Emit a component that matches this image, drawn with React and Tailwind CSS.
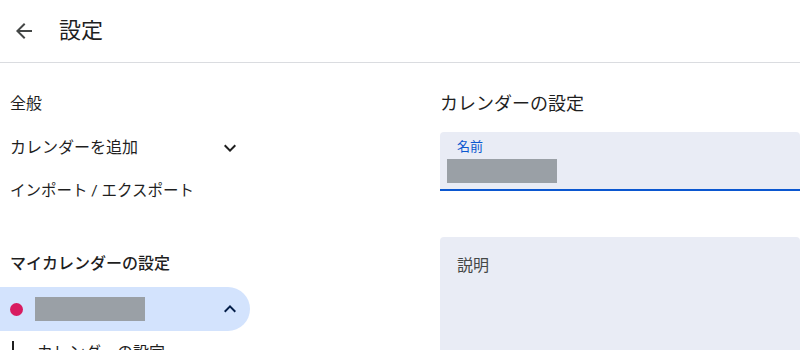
export default function App() {
  const font = { fontFamily: '"Roboto", "Noto Sans CJK JP", sans-serif' };
  return (
    <div className="w-[800px] h-[350px] overflow-hidden bg-white text-[#1f1f1f]" style={font}>
      <header className="h-[63px] flex items-center border-b border-[#dadce0]">
        <button className="w-[48px] h-[48px] flex items-center justify-center text-[#444746]">
          <svg width="24" height="24" viewBox="0 0 24 24" fill="currentColor">
            <path d="M20 11H7.83l5.59-5.59L12 4l-8 8 8 8 1.41-1.41L7.83 13H20v-2z" />
          </svg>
        </button>
        <h1 className="ml-[11px] text-[22px] text-[#1f1f1f] leading-none">設定</h1>
      </header>

      <div className="flex">
        <aside className="w-[250px] shrink-0 pt-[19px]">
          <div className="h-[44px] flex items-center pl-[10px] text-[16px] text-[#1f1f1f]">全般</div>
          <div className="h-[44px] flex items-center justify-between pl-[10px] pr-[8px] text-[16px] text-[#1f1f1f]">
            <span>カレンダーを追加</span>
            <svg width="24" height="24" viewBox="0 0 24 24" fill="currentColor">
              <path d="M7.41 8.59 12 13.17l4.59-4.58L18 10l-6 6-6-6 1.41-1.41z" />
            </svg>
          </div>
          <div className="h-[44px] flex items-center pl-[10px] text-[15.5px] text-[#1f1f1f]">インポート / エクスポート</div>
          <div className="h-[40px]" />
          <div className="h-[20px] flex items-center pl-[10px] text-[16px] font-medium text-[#1f1f1f]">マイカレンダーの設定</div>
          <div className="h-[13px]" />
          <div className="h-[44px] flex items-center bg-[#d3e3fd] rounded-r-full pl-[10px] pr-[8px]">
            <span className="w-[13px] h-[13px] rounded-full bg-[#d81b60]" />
            <span className="ml-[12px] w-[110px] h-[24px] bg-[#9aa0a6]" />
            <svg className="ml-auto text-[#041e49]" width="24" height="24" viewBox="0 0 24 24" fill="currentColor">
              <path d="M7.41 15.41 12 10.83l4.59 4.58L18 14l-6-6-6 6z" />
            </svg>
          </div>
          <div className="flex items-start pl-[12px] pt-[10px]">
            <span className="w-[2px] h-[20px] bg-[#1f1f1f]" />
            <span className="ml-[23px] text-[16px] text-[#1f1f1f] leading-[20px] mt-[2px]">カレンダーの設定</span>
          </div>
        </aside>

        <main className="flex-1 pl-[190px] pt-[29px]">
          <h2 className="text-[18px] text-[#1f1f1f] leading-[24px]">カレンダーの設定</h2>
          <div className="mt-[16px] h-[59px] bg-[#e9ecf5] rounded-t-[4px] border-b-2 border-[#0b57d0] pl-[7px] pt-[7px]">
            <div className="pl-[10px] text-[13px] leading-[16px] text-[#0b57d0]">名前</div>
            <div className="mt-[4px] w-[110px] h-[24px] bg-[#9aa0a6]" />
          </div>
          <div className="mt-[46px] h-[130px] bg-[#e9ecf5] rounded-t-[4px] pl-[17px] pt-[17px]">
            <div className="text-[16px] leading-[24px] text-[#444746]">説明</div>
          </div>
        </main>
      </div>
    </div>
  );
}
